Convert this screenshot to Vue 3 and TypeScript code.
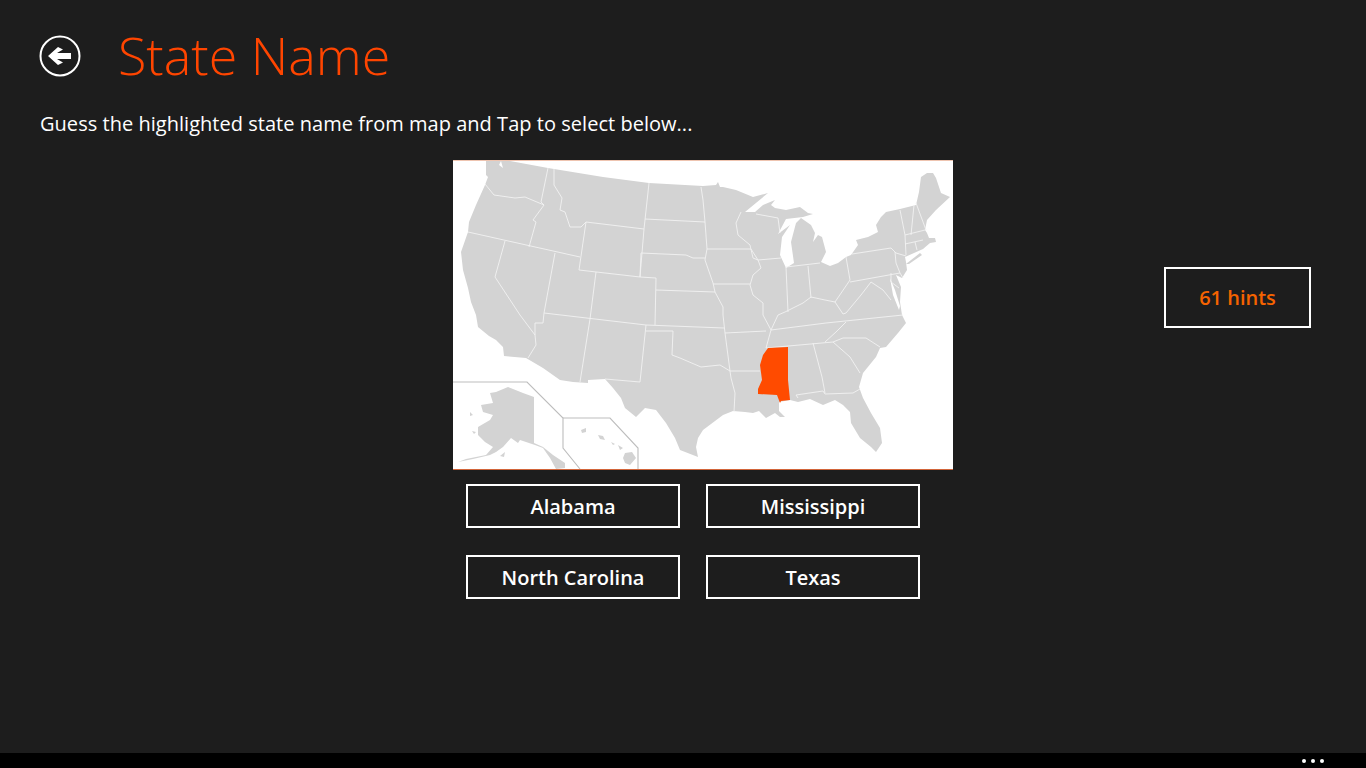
<script setup lang="ts">
const answers: string[] = ['Alabama', 'Mississippi', 'North Carolina', 'Texas']

const mainland =
  'M33,0 L33,15 L35,17 L32,25 L23,45 L16,62 L15,72 L8,92 L10,110 L15,128 L18,142 L23,155 L25,167 L36,176 L43,180 L50,187 L51,196 L73,198 L90,208 L107,220 L120,222 L135,223 L135,220 L152,219 L160,228 L168,238 L172,248 L183,257 L192,248 L203,250 L213,263 L222,278 L227,290 L245,297 L243,287 L245,278 L250,270 L270,255 L280,251 L292,252 L300,253 L306,251 L313,258 L322,253 L327,257 L332,257 L326,251 L326,242 L337,240 L345,242 L357,239 L370,245 L382,240 L390,245 L397,252 L398,263 L407,278 L418,287 L423,292 L429,283 L427,268 L418,253 L410,238 L406,227 L410,213 L423,197 L427,188 L433,187 L445,173 L453,163 L449,155 L447,142 L448,127 L443,115 L449,118 L454,110 L453,102 L452,97 L470,89 L477,83 L483,82 L482,78 L476,78 L474,73 L472,70 L474,60 L483,50 L497,37 L488,33 L483,18 L480,13 L474,13 L468,17 L466,32 L463,45 L447,49 L433,52 L428,57 L423,65 L425,72 L415,77 L403,80 L405,85 L398,95 L393,97 L385,103 L377,106 L368,102 L373,92 L369,77 L365,75 L360,82 L362,73 L358,65 L348,58 L343,63 L338,82 L341,103 L333,108 L327,95 L329,77 L337,65 L325,74 L333,59 L350,57 L360,54 L355,53 L347,47 L333,50 L322,48 L318,45 L322,40 L310,45 L302,52 L292,52 L315,33 L300,37 L283,30 L270,27 L267,27 L265,22 L263,25 L250,26 L196,23 L150,17 L95,8 L52,0 Z'

const alaska =
  'M37,233 L43,232 L55,227 L70,233 L81,237 L81,283 L90,287 L100,295 L112,303 L112,308 L103,309 L97,298 L90,288 L82,285 L67,280 L65,283 L58,278 L50,287 L43,292 L37,295 L20,299 L5,302 L13,299 L33,295 L40,287 L32,282 L25,275 L25,267 L37,260 L40,255 L30,252 L28,245 L40,243 Z'

const mississippi =
  'M315,188 L335,187 L335,220 L337,240 L328,241 L327,243 L324,235 L305,234 L305,229 L309,220 L307,205 L310,195 Z'

const lines: string[] = [
  '32,24 41,35 62,38 72,37 91,45',
  '95,8 88,42 91,45 80,60 83,62 76,87',
  '15,72 127,97',
  '101,9 101,25 109,38 107,50 112,52 117,67 128,67 133,62',
  '133,62 191,69 187,117 126,110 133,62',
  '196,23 191,69',
  '192,59 252,62',
  '248,27 250,40 252,62 254,89 252,100 260,123 262,132 270,147 270,155 272,173 277,211 278,218 282,233 281,252',
  '188,93 233,95 240,98 252,98',
  '188,93 187,117 203,118 202,165',
  '203,130 262,132',
  '254,89 298,89 305,100 308,108 300,115 297,125 300,135 310,143 310,155 318,170 313,188',
  '260,124 297,124',
  '288,52 283,63 285,75 297,85 300,98 305,100 328,98',
  '303,54 325,58 327,73',
  '333,107 335,152',
  '355,106 358,138',
  '333,107 367,103',
  '393,97 397,120 382,142 372,140 358,137 350,143 332,152 325,155 318,170',
  '52,81 42,117 67,155 82,175 83,185 75,198',
  '102,93 91,153 90,163 82,163 82,175',
  '143,112 137,159 127,222',
  '91,153 193,165 271,168',
  '193,165 187,222 152,219',
  '193,171 220,171 219,195 227,198 248,207 267,205 277,211 307,211',
  '272,173 313,171',
  '313,188 380,182 390,178 413,178 427,187',
  '318,170 373,163 450,155',
  '372,182 383,172 393,162',
  '380,182 397,197 407,213',
  '360,183 369,217 372,233',
  '345,238 343,235 370,231 372,234 400,233 407,229',
  '382,142 390,154 393,153 408,135 418,122 430,130 438,140',
  '397,122 447,113',
  '399,94 438,88 443,93 453,96',
  '442,92 443,103 447,113 450,118',
  '438,113 438,122 446,128',
  '447,50 452,75 453,95',
  '461,45 458,75',
  '463,43 473,70',
  '452,75 472,70',
  '452,84 470,80',
  '462,82 464,90',
]
</script>

<template>
  <div class="page">
    <header class="header">
      <svg class="back" width="42" height="42" viewBox="0 0 42 42" aria-hidden="true">
        <circle cx="21" cy="21" r="19.5" fill="none" stroke="#fff" stroke-width="2" />
        <path d="M9 21 L19 12 L24 14.5 L18 18 H32 V24 H18 L24 27.5 L19 30 Z" fill="#fff" />
      </svg>
      <h1 class="title">State Name</h1>
    </header>
    <p class="prompt">Guess the highlighted state name from map and Tap to select below...</p>
    <main class="content">
      <section class="quiz">
        <svg class="map" width="500" height="310" viewBox="0 0 500 310" role="img" aria-label="Map of the United States">
          <defs>
            <filter id="soft" x="0" y="0" width="100%" height="100%">
              <feGaussianBlur stdDeviation="0.4" />
            </filter>
          </defs>
          <rect width="500" height="310" fill="#fff" />
          <g filter="url(#soft)">
            <path :d="mainland" fill="#d3d3d3" />
            <path d="M48,1 L50,8 L46,5 Z M437,118 L442,130 L447,146 L446,150 L440,135 Z" fill="#fff" />
            <path d="M453,104 L467,93 L469,95 L456,104 Z" fill="#d3d3d3" />
            <g fill="none" stroke="#f2f2f2" stroke-width="0.9" stroke-linejoin="round">
              <polyline v-for="(pts, i) in lines" :key="i" :points="pts" />
            </g>
            <path :d="alaska" fill="#d3d3d3" />
            <path d="M47,296 L52,292 L51,297 Z M17,252 L20,255 L17,256 Z M19,271 L23,272 L21,274 Z" fill="#d3d3d3" />
            <path d="M128,270 L133,268 L133,272 L129,273 Z M145,275 L150,276 L152,280 L147,279 Z M158,282 L162,284 L160,285 Z M165,285 L170,288 L167,290 Z" fill="#d3d3d3" />
            <path d="M172,293 L179,292 L183,298 L177,305 L172,303 L170,298 Z" fill="#d3d3d3" />
            <g fill="none" stroke="#bdbdbd" stroke-width="1.1">
              <polyline points="0,222 74,222 110,258 110,288 127,309" />
              <polyline points="110,258 157,258 185,288 185,309" />
            </g>
            <path :d="mississippi" fill="#ff4b00" />
          </g>
          <rect width="500" height="1" fill="#eec4b0" />
          <rect y="309" width="500" height="1" fill="#d2653a" />
        </svg>
        <div class="answers">
          <button v-for="a in answers" :key="a" class="answer" type="button">{{ a }}</button>
        </div>
      </section>
      <button class="hints" type="button">61 hints</button>
    </main>
    <footer class="appbar">
      <span class="dots"><i /><i /><i /></span>
    </footer>
  </div>
</template>

<style scoped>
.page {
  width: 1366px;
  height: 768px;
  background: #1d1d1d;
  color: #fff;
  display: flex;
  flex-direction: column;
  overflow: hidden;
  font-family: "Open Sans", "Noto Sans", "Liberation Sans", sans-serif;
}
.header {
  display: flex;
  align-items: center;
  height: 74px;
  padding: 19px 0 0 39px;
  box-sizing: content-box;
}
.back {
  flex: none;
}
.title {
  margin: 0 0 2px 37px;
  font-size: 52px;
  font-weight: 300;
  line-height: 74px;
  color: #ff4500;
}
.prompt {
  margin: 17px 0 0 40px;
  font-size: 20px;
  line-height: 28px;
  letter-spacing: 0.03px;
}
.content {
  display: flex;
  align-items: flex-start;
  margin-top: 22px;
  padding-left: 453px;
}
.quiz {
  width: 500px;
}
.map {
  display: block;
}
.answers {
  display: grid;
  grid-template-columns: 214px 214px;
  column-gap: 26px;
  row-gap: 27px;
  margin: 14px 0 0 13px;
}
.answer,
.hints {
  background: transparent;
  border: 2px solid #fff;
  border-radius: 0;
  font-family: inherit;
  font-weight: 600;
  font-size: 20px;
  padding: 0;
  color: #fff;
}
.answer {
  height: 44px;
}
.hints {
  width: 147px;
  height: 61px;
  margin: 107px 0 0 211px;
  color: #f56300;
}
.appbar {
  margin-top: auto;
  height: 15px;
  background: #000;
  display: flex;
  justify-content: flex-end;
  align-items: center;
  padding-right: 42px;
}
.dots {
  display: flex;
  gap: 5px;
}
.dots i {
  display: block;
  width: 4px;
  height: 4px;
  border-radius: 50%;
  background: #fff;
}
</style>
